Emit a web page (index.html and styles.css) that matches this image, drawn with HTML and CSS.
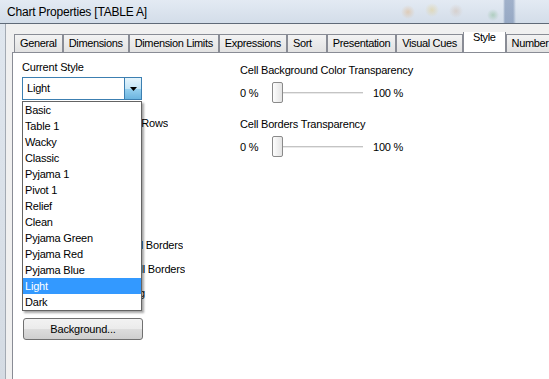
FILE: index.html
```html
<!DOCTYPE html>
<html lang="en">

<head>
    <meta charset="UTF-8">
    <title>Chart Properties [TABLE A]</title>
    <link rel="stylesheet" href="styles.css">
</head>

<body>
    <div class="window">
        <div class="titlebar">Chart Properties [TABLE A]</div>
        <div class="client">
            <div class="frame-edge"></div>
            <div class="dialog">
                <div class="tabs">
                    <div class="tab">General</div>
                    <div class="tab">Dimensions</div>
                    <div class="tab">Dimension Limits</div>
                    <div class="tab">Expressions</div>
                    <div class="tab tab-wide">Sort</div>
                    <div class="tab">Presentation</div>
                    <div class="tab">Visual Cues</div>
                    <div class="tab tab-active">Style</div>
                    <div class="tab">Number</div>
                </div>
                <div class="panel">
                    <div class="col-left">
                        <div class="field-label">Current Style</div>
                        <div class="combo-wrap">
                            <div class="combo">
                                <span class="combo-value">Light</span>
                                <span class="combo-btn">
                                    <svg width="7" height="4" viewBox="0 0 7 4"><path d="M0 0h7L3.5 4z" fill="#000"/></svg>
                                </span>
                            </div>
                            <ul class="combo-list">
                                <li>Basic</li>
                                <li>Table 1</li>
                                <li>Wacky</li>
                                <li>Classic</li>
                                <li>Pyjama 1</li>
                                <li>Pivot 1</li>
                                <li>Relief</li>
                                <li>Clean</li>
                                <li>Pyjama Green</li>
                                <li>Pyjama Red</li>
                                <li>Pyjama Blue</li>
                                <li class="selected">Light</li>
                                <li>Dark</li>
                            </ul>
                        </div>
                        <div class="opt opt-stripes">Stripes every <span class="spin">1</span> Rows</div>
                        <div class="opt opt-dim"><span class="check"></span>Dimension Cell Borders</div>
                        <div class="opt opt-expr"><span class="check"></span>Expression Cell Borders</div>
                        <div class="opt opt-spacing"><span class="check"></span>Border Above Spacing</div>
                        <button type="button" class="btn">Background...</button>
                    </div>
                    <div class="col-right">
                        <div class="field-label">Cell Background Color Transparency</div>
                        <div class="slider-row">
                            <span class="pct-min">0 %</span>
                            <div class="slider"><span class="thumb"></span><span class="track"></span></div>
                            <span class="pct-max">100 %</span>
                        </div>
                        <div class="field-label second">Cell Borders Transparency</div>
                        <div class="slider-row">
                            <span class="pct-min">0 %</span>
                            <div class="slider"><span class="thumb"></span><span class="track"></span></div>
                            <span class="pct-max">100 %</span>
                        </div>
                    </div>
                </div>
            </div>
        </div>
    </div>
</body>

</html>
```

FILE: styles.css
```css
body {
    margin: 0;
    font-family: "Liberation Sans", Arial, sans-serif;
    font-size: 11px;
    letter-spacing: -0.2px;
    color: #000;
    background-color: #f0f0f0;
    overflow: hidden;
}

.window {
    width: 549px;
    height: 379px;
    display: flex;
    flex-direction: column;
}

.titlebar {
    height: 23px;
    flex-shrink: 0;
    padding-left: 7px;
    display: flex;
    align-items: center;
    font-size: 12px;
    border-bottom: 1px solid #5f6a78;
    background:
        linear-gradient(90deg, transparent 503px, rgba(60, 90, 140, 0.4) 505px, rgba(60, 90, 140, 0.4) 513px, transparent 516px),
        radial-gradient(circle at 408px 12px, rgba(230, 150, 60, 0.3), transparent 7px),
        radial-gradient(circle at 432px 10px, rgba(230, 190, 70, 0.3), transparent 7px),
        radial-gradient(circle at 456px 11px, rgba(200, 150, 110, 0.25), transparent 7px),
        radial-gradient(circle at 493px 15px, rgba(80, 160, 90, 0.3), transparent 6px),
        linear-gradient(#e3eaf3, #d3dde9);
}

.client {
    flex: 1;
    display: flex;
    min-height: 0;
}

.frame-edge {
    width: 5px;
    background: linear-gradient(#dfe6ee, #d4dbe3);
    border-right: 1px solid #a3aab3;
}

.dialog {
    flex: 1;
    min-width: 0;
    padding: 8px 0 0 6px;
    display: flex;
    flex-direction: column;
}

/* tab strip */
.tabs {
    height: 20px;
    padding-left: 2px;
    display: flex;
    align-items: flex-end;
    white-space: nowrap;
    overflow: hidden;
}

.tab {
    flex-shrink: 0;
    height: 17px;
    line-height: 17px;
    padding: 0 5px;
    letter-spacing: -0.35px;
    border: 1px solid #898c95;
    border-bottom: none;
    background: linear-gradient(#f3f3f3, #e2e2e2);
}

.tab-wide {
    padding-right: 14px;
}

.tab-active {
    height: 20px;
    line-height: 16px;
    padding: 0 9px 4px;
    margin-bottom: -1px;
    background: #fff;
    position: relative;
    z-index: 1;
}

.panel {
    flex: 1;
    background-color: #fff;
    border-top: 1px solid #898c95;
    border-left: 1px solid #898c95;
    padding: 7px 0 0 9px;
    display: grid;
    grid-template-columns: 218px 1fr;
    align-items: start;
}

.field-label {
    line-height: 15px;
    white-space: nowrap;
}

/* combo box with its open list */
.col-left {
    display: flex;
    flex-direction: column;
    align-items: flex-start;
}

.combo-wrap {
    margin-top: 2px;
    position: relative;
}

.combo {
    width: 118px;
    height: 21px;
    border: 1px solid #3c7fb1;
    display: flex;
    align-items: stretch;
}

.combo-value {
    flex: 1;
    padding-left: 4px;
    line-height: 21px;
}

.combo-btn {
    width: 16px;
    border-left: 1px solid #3c7fb1;
    background: linear-gradient(#e5f4fc 0%, #c4e5f6 50%, #98d1ef 50%, #6cb5e0 100%);
    display: flex;
    align-items: center;
    justify-content: center;
}

.combo-list {
    list-style: none;
    margin: 0;
    padding: 0;
    position: absolute;
    top: 24px;
    left: 0;
    width: 118px;
    background-color: #fff;
    border: 1px solid #646464;
    box-shadow: 2px 2px 2px rgba(0, 0, 0, 0.35);
    z-index: 5;
}

.combo-list li {
    height: 16px;
    line-height: 16px;
    padding-left: 2px;
}

.combo-list .selected {
    background-color: #3399ff;
    color: #fff;
}

/* options hidden under the list */
.opt {
    display: flex;
    align-items: center;
    justify-content: flex-end;
    gap: 4px;
    height: 24px;
    overflow: hidden;
    white-space: nowrap;
}

.opt-stripes {
    width: 146px;
    height: 20px;
    margin-top: 13px;
}

.opt-dim {
    width: 161px;
    margin-top: 100px;
}

.opt-expr {
    width: 163px;
}

.opt-spacing {
    width: 123px;
}

.spin {
    width: 30px;
    height: 18px;
    border: 1px solid #abadb3;
}

.check {
    width: 11px;
    height: 11px;
    border: 1px solid #8f8f8f;
}

.btn {
    margin: 13px 0 0 1px;
    width: 120px;
    height: 22px;
    padding: 0;
    font-family: inherit;
    font-size: 11px;
    letter-spacing: -0.2px;
    color: #000;
    border: 1px solid #707070;
    border-radius: 3px;
    background: linear-gradient(#f2f2f2 0%, #ebebeb 50%, #dddddd 50%, #cfcfcf 100%);
}

/* transparency sliders */
.col-right {
    padding-top: 3px;
    display: flex;
    flex-direction: column;
}

.field-label.second {
    margin-top: 14px;
}

.slider-row {
    margin-top: 4px;
    height: 21px;
    display: flex;
    align-items: center;
    white-space: nowrap;
}

.pct-min {
    width: 32px;
}

.slider {
    width: 91px;
    height: 21px;
    display: flex;
    align-items: center;
}

.thumb {
    width: 9px;
    height: 19px;
    border: 1px solid #8a8a8a;
    border-radius: 2px;
    background: linear-gradient(90deg, #fdfdfd, #e4e4e4);
}

.track {
    flex: 1;
    height: 1px;
    background-color: #c4c4c4;
    border-bottom: 1px solid #e9e9e9;
}

.pct-max {
    margin-left: 10px;
}
```
